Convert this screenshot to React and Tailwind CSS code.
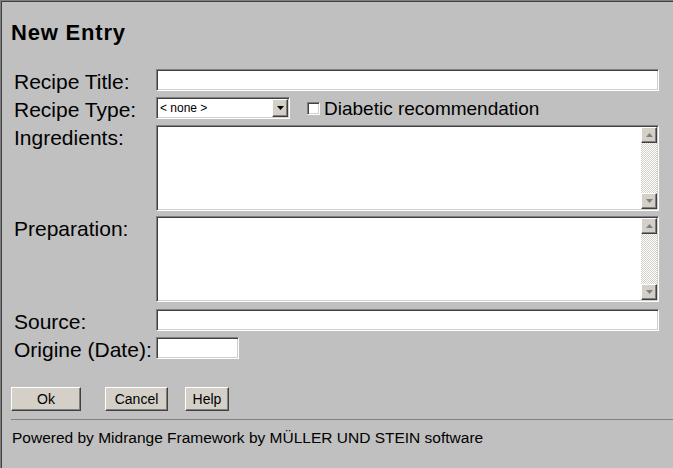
import React from 'react';

const font = "font-['Liberation_Sans',Arial,sans-serif]";
const inset = 'border border-t-[#808080] border-l-[#808080] border-b-white border-r-white shadow-[inset_1px_1px_0_#404040,inset_-1px_-1px_0_#d4d0c8]';
const outset = 'border border-t-white border-l-white border-b-[#404040] border-r-[#404040] shadow-[inset_-1px_-1px_0_#808080]';

const Arrow = ({ up, color = '#808080' }) => (
    <div className={`w-[16px] h-[16px] bg-[#d4d0c8] flex items-center justify-center ${outset}`}>
        <svg width="7" height="4" viewBox="0 0 7 4">
            {up ? <path d="M3.5 0L7 4H0z" fill={color} /> : <path d="M0 0h7L3.5 4z" fill={color} />}
        </svg>
    </div>
);

const TextArea = () => (
    <div className={`w-[503px] h-[86px] bg-white flex ${inset}`}>
        <div className="flex-1" />
        <div className="w-[16px] flex flex-col my-[1px] mr-[1px]">
            <Arrow up />
            <div className="flex-1 bg-[repeating-conic-gradient(#d4d0c8_0%_25%,#ffffff_0%_50%)] bg-[length:2px_2px]" />
            <Arrow />
        </div>
    </div>
);

const Row = ({ label, children }) => (
    <div className="flex items-start">
        <div className="w-[142px] pt-[3px] text-[21px] leading-[19px] whitespace-nowrap">{label}</div>
        {children}
    </div>
);

const Button = ({ children, className }) => (
    <button className={`h-[24px] bg-[#d4d0c8] text-[14px] ${outset} ${className}`}>{children}</button>
);

export default function App() {
    return (
        <div className={`w-[673px] h-[468px] overflow-hidden bg-[#c0c0c0] text-black border-t border-l border-[#808080] shadow-[inset_1px_1px_0_#404040] ${font}`}>
            <h1 className="pt-[20px] pl-[10px] text-[22px] leading-[23px] font-bold tracking-[0.8px]">New Entry</h1>

            {/* Formular */}
            <div className="mt-[25px] pl-[13px] flex flex-col gap-[6px]">
                <Row label="Recipe Title:">
                    <input className={`h-[22px] w-[503px] bg-white outline-none ${inset}`} />
                </Row>
                <Row label="Recipe Type:">
                    <div className={`w-[134px] h-[22px] bg-white flex items-center ${inset}`}>
                        <span className="flex-1 pl-[3px] text-[12px]">&lt; none &gt;</span>
                        <div className="mr-[1px]">
                            <div className={`w-[16px] h-[18px] bg-[#d4d0c8] flex items-center justify-center ${outset}`}>
                                <svg width="7" height="4" viewBox="0 0 7 4"><path d="M0 0h7L3.5 4z" fill="#000" /></svg>
                            </div>
                        </div>
                    </div>
                    <div className="flex items-center ml-[17px] mt-[4px]">
                        <div className={`w-[13px] h-[13px] bg-white ${inset}`} />
                        <span className="ml-[4px] text-[19px] leading-[15px]">Diabetic recommendation</span>
                    </div>
                </Row>
                <Row label="Ingredients:">
                    <TextArea />
                </Row>
                <div className="mt-[-1px]">
                    <Row label="Preparation:">
                        <TextArea />
                    </Row>
                </div>
                <div className="mt-[1px]">
                    <Row label="Source:">
                        <input className={`h-[22px] w-[503px] bg-white outline-none ${inset}`} />
                    </Row>
                </div>
                <Row label="Origine (Date):">
                    <input className={`h-[22px] w-[83px] bg-white outline-none ${inset}`} />
                </Row>
            </div>

            {/* Buttons */}
            <div className="mt-[28px] pl-[10px] flex items-center">
                <Button className="w-[70px]">Ok</Button>
                <Button className="w-[63px] ml-[24px]">Cancel</Button>
                <Button className="w-[44px] ml-[17px]">Help</Button>
            </div>

            <div className="mt-[8px] ml-[10px] border-t border-[#808080]" />
            <p className="mt-[9px] pl-[11px] text-[15.5px] leading-[17px]">
                Powered by Midrange Framework by MÜLLER UND STEIN software
            </p>
        </div>
    );
}
